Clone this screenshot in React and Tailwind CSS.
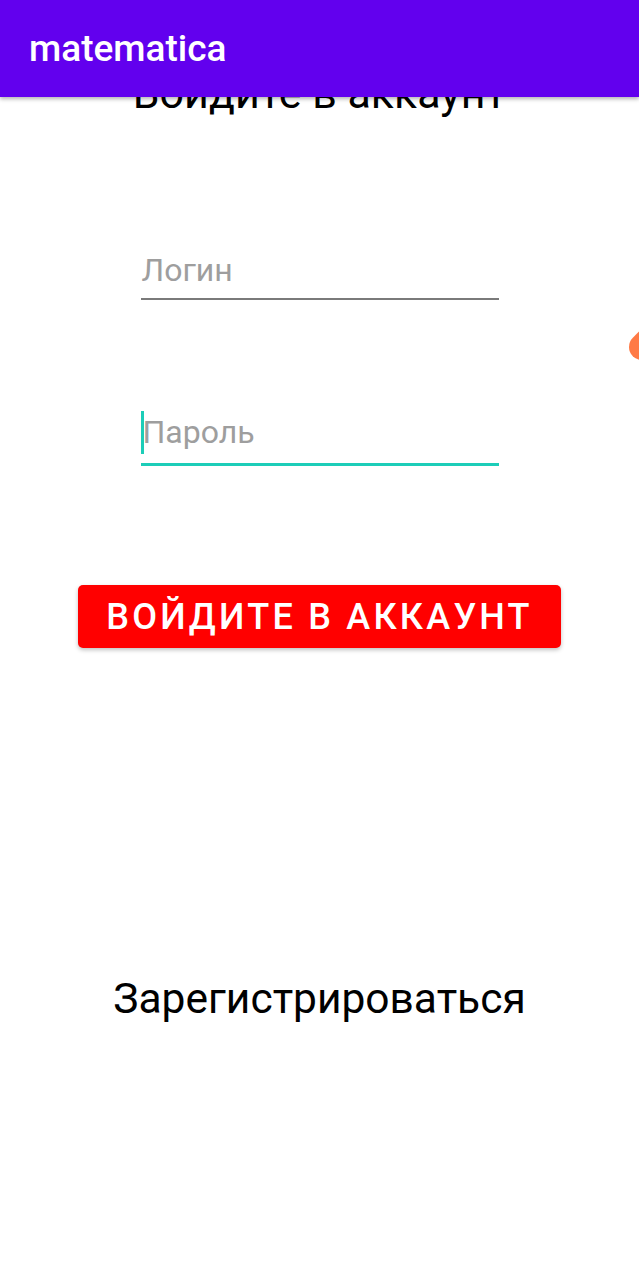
import React from "react";

const App = () => {
    return (
        <div className="relative w-full h-[1280px] bg-white overflow-hidden font-['Roboto',sans-serif]">
            <div className="relative z-10 h-[97px] bg-[#6200EE] shadow-[0_2px_4px_rgba(0,0,0,0.3)] flex items-center px-[29px]">
                <span className="text-white text-[37px] font-medium leading-none">matematica</span>
            </div>

            <div className="flex flex-col items-center">
                <h1 className="-mt-[29px] text-[43px] leading-[50px] text-black font-normal">Войдите в аккаунт</h1>

                <div className="mt-[131px] w-[358px] border-b-2 border-[#7a7a7a] pb-[6px]">
                    <span className="block pl-[1px] text-[32px] leading-[43px] text-[#9e9e9e]">Логин</span>
                </div>

                <div className="mt-[111px] w-[358px] border-b-[3px] border-[#1CCDB8] pb-[9px] flex items-center">
                    <span className="w-[3px] h-[43px] bg-[#1CCDB8]"></span>
                    <span className="-ml-[1px] text-[32px] leading-[43px] text-[#9e9e9e]">Пароль</span>
                </div>

                <button className="mt-[119px] w-[483px] h-[63px] bg-[#FF0000] rounded-[5px] shadow-[0_2px_4px_rgba(0,0,0,0.25)] text-white text-[36px] font-medium uppercase tracking-[0.09em]">
                    Войдите в аккаунт
                </button>

                <div className="mt-[326px] text-[42.5px] leading-[50px] text-black">Зарегистрироваться</div>
            </div>

            <div className="absolute left-[629px] top-[334px] w-[26px] h-[26px] rounded-full rounded-tr-none rotate-[-45deg] bg-[#FF7A45]"></div>
        </div>
    );
};

export default App;
